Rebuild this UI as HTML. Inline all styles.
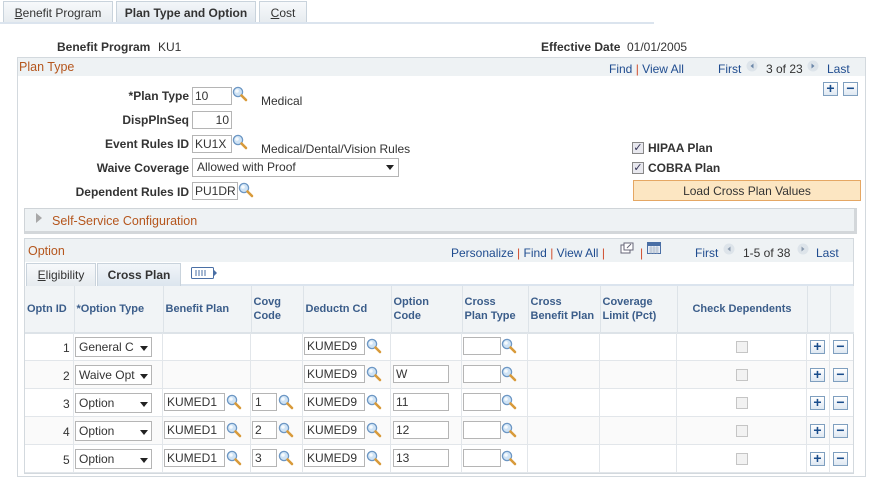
<!DOCTYPE html>
<html><head><meta charset="utf-8"><style>
*{box-sizing:border-box;margin:0;padding:0}
body{width:869px;height:482px;background:#fff;font-family:"Liberation Sans",Arial,sans-serif;font-size:12px;color:#333;position:relative;overflow:hidden}
.a{position:absolute;white-space:nowrap}
.tab{position:absolute;top:1px;height:22px;border:1px solid #c9d3dc;border-bottom:none;background:linear-gradient(#f7f9fb,#e6ebef);color:#333;font-size:12px;padding-top:4px;text-align:center}
.lbl{position:absolute;font-weight:bold;color:#333;text-align:right;white-space:nowrap}
.inp{position:absolute;height:18px;border:1px solid #b5b5b5;background:#fff;font-size:12px;padding:1px 2px;color:#333;white-space:nowrap;overflow:hidden}
.lnk{color:#1f4c8f}
.sep{color:#d04c2c}
.pm{position:absolute;width:15px;height:14px;border:1px solid #7f9fbf;background:linear-gradient(#fff,#dfe8f2);color:#1a4d8c;font-weight:bold;font-size:14px;line-height:11px;text-align:center}
.mag{position:absolute;width:16px;height:16px}
table{position:absolute;left:25px;top:286px;border-collapse:collapse;table-layout:fixed}
th{background:#f1f4f6;color:#3b5d8a;font-size:11px;font-weight:bold;text-align:left;vertical-align:middle;padding:0 2px;height:47px;border-left:1px solid #dde3e8;border-bottom:2px solid #dde3e8;line-height:14px}
.r{position:absolute;left:25px;width:828px;height:28px;border-bottom:1px solid #e2e6ea}
.vl{position:absolute;top:333px;width:1px;height:140px;background:#e2e6ea}
.sel{position:absolute;height:20px;width:77px;border:1px solid #b5b5b5;background:#fff;padding:2px 3px;font-size:12px;overflow:hidden;white-space:nowrap}
.cb{position:absolute;width:12px;height:12px;border:1px solid #c5c5c5;background:#f2f2f2}
</style></head><body>
<svg width="0" height="0" style="position:absolute"><defs><symbol id="m" viewBox="0 0 16 16"><circle cx="6" cy="6" r="4.6" fill="#cfe3f5" stroke="#6d97c4" stroke-width="1.3"/><circle cx="5" cy="5" r="1.8" fill="#fff" opacity=".8"/><path d="M9.5 9.5 L14 14" stroke="#d89a3a" stroke-width="2.6" stroke-linecap="round"/></symbol></defs></svg>

<div class="tab" style="left:3px;width:110px"><u>B</u>enefit Program</div>
<div class="tab" style="left:116px;width:140px;background:linear-gradient(#f3f6f9,#dfe6ed);font-weight:bold">Plan Type and Option</div>
<div class="tab" style="left:259px;width:48px"><u>C</u>ost</div>
<div class="a" style="left:0;top:22px;width:654px;height:2px;background:#dbe4ee"></div>

<div class="lbl" style="left:57px;top:40px">Benefit Program</div><div class="a" style="left:158px;top:40px">KU1</div>
<div class="lbl" style="left:541px;top:40px">Effective Date</div><div class="a" style="left:627px;top:40px">01/01/2005</div>

<div class="a" style="left:17px;top:57px;width:849px;height:420px;border:1px solid #d3d9de"></div>
<div class="a" style="left:18px;top:58px;width:847px;height:18px;background:#eef2f4"></div>
<div class="a" style="left:19px;top:60px;color:#b5561d;font-size:12.5px">Plan Type</div>
<div class="a" style="left:609px;top:62px"><span class="lnk">Find</span> <span class="sep">|</span> <span class="lnk">View All</span></div>
<div class="a lnk" style="left:718px;top:62px">First</div>
<svg class="a" style="left:746px;top:60px" width="12" height="12"><circle cx="6" cy="6" r="5.5" fill="#dde4ea"/><path d="M7.5 3.5 L4.5 6 L7.5 8.5Z" fill="#6a86a8"/></svg>
<div class="a" style="left:766px;top:62px">3 of 23</div>
<svg class="a" style="left:807px;top:60px" width="12" height="12"><circle cx="6" cy="6" r="5.5" fill="#dde4ea"/><path d="M4.5 3.5 L7.5 6 L4.5 8.5Z" fill="#6a86a8"/></svg>
<div class="a lnk" style="left:827px;top:62px">Last</div>
<div class="pm" style="left:823px;top:82px">+</div><div class="pm" style="left:843px;top:82px">−</div>

<div class="lbl" style="right:680px;top:89px">*Plan Type</div>
<div class="inp" style="left:192px;top:87px;width:40px">10</div><svg class="mag" style="left:232px;top:86px"><use href="#m"/></svg>
<div class="a" style="left:261px;top:94px">Medical</div>
<div class="lbl" style="right:680px;top:113px">DispPlnSeq</div>
<div class="inp" style="left:192px;top:111px;width:40px;text-align:right">10</div>
<div class="lbl" style="right:680px;top:137px">Event Rules ID</div>
<div class="inp" style="left:192px;top:135px;width:40px">KU1X</div><svg class="mag" style="left:232px;top:134px"><use href="#m"/></svg>
<div class="a" style="left:261px;top:142px">Medical/Dental/Vision Rules</div>
<div class="lbl" style="right:680px;top:161px">Waive Coverage</div>
<div class="inp" style="left:192px;top:158px;width:207px;height:19px;padding-left:4px">Allowed with Proof</div>
<svg class="a" style="left:386px;top:165px" width="8" height="5"><path d="M0 0H8L4 5Z" fill="#222"/></svg>
<div class="lbl" style="right:680px;top:185px">Dependent Rules ID</div>
<div class="inp" style="left:192px;top:182px;width:46px">PU1DR</div><svg class="mag" style="left:238px;top:182px"><use href="#m"/></svg>

<div class="a" style="left:632px;top:142px;width:12px;height:12px;border:1px solid #888;background:#e8e8ee;color:#335;font-size:11px;line-height:10px;text-align:center">✓</div>
<div class="lbl" style="left:648px;top:141px">HIPAA Plan</div>
<div class="a" style="left:632px;top:162px;width:12px;height:12px;border:1px solid #888;background:#e8e8ee;color:#335;font-size:11px;line-height:10px;text-align:center">✓</div>
<div class="lbl" style="left:648px;top:161px">COBRA Plan</div>
<div class="a" style="left:633px;top:180px;width:228px;height:21px;background:#fce6c2;border:1px solid #e5a763;text-align:center;padding-top:3px;font-size:12px">Load Cross Plan Values</div>

<div class="a" style="left:24px;top:208px;width:833px;height:26px;border:1px solid #cfd4d8;border-right:3px solid #d3d7da;border-bottom:3px solid #d3d7da;background:#eef2f4"></div>
<svg class="a" style="left:36px;top:213px" width="6" height="10"><path d="M0 0L6 5L0 10Z" fill="#a8a8a8"/></svg>
<div class="a" style="left:52px;top:214px;color:#b5561d;font-size:12.5px">Self-Service Configuration</div>

<div class="a" style="left:24px;top:238px;width:830px;height:236px;border:1px solid #d3d9de"></div>
<div class="a" style="left:25px;top:239px;width:828px;height:23px;background:#eef2f4"></div>
<div class="a" style="left:28px;top:244px;color:#b5561d;font-size:12.5px">Option</div>
<div class="a" style="left:451px;top:246px"><span class="lnk">Personalize</span> <span class="sep">|</span> <span class="lnk">Find</span> <span class="sep">|</span> <span class="lnk">View All</span> <span class="sep">|</span></div>
<svg class="a" style="left:620px;top:242px" width="14" height="12"><rect x="1" y="3" width="9" height="8" fill="#fff" stroke="#667"/><rect x="4" y="1" width="9" height="7" fill="#fff" stroke="#667"/><path d="M7 6L11 2" stroke="#667"/></svg>
<div class="a sep" style="left:640px;top:246px">|</div>
<svg class="a" style="left:647px;top:242px" width="14" height="12"><rect x=".5" y=".5" width="13" height="11" fill="#e9eef6" stroke="#4a6fa5"/><rect x="1" y="1" width="12" height="3" fill="#4a6fa5"/><path d="M2 6h10M2 8h10M2 10h10M4 4v8M7 4v8M10 4v8" stroke="#9ab" stroke-width=".6"/></svg>
<div class="a lnk" style="left:695px;top:246px">First</div>
<svg class="a" style="left:723px;top:243px" width="12" height="12"><circle cx="6" cy="6" r="5.5" fill="#dde4ea"/><path d="M7.5 3.5 L4.5 6 L7.5 8.5Z" fill="#8a9aae"/></svg>
<div class="a" style="left:743px;top:246px">1-5 of 38</div>
<svg class="a" style="left:797px;top:243px" width="12" height="12"><circle cx="6" cy="6" r="5.5" fill="#dde4ea"/><path d="M4.5 3.5 L7.5 6 L4.5 8.5Z" fill="#8a9aae"/></svg>
<div class="a lnk" style="left:816px;top:246px">Last</div>

<div class="tab" style="left:26px;top:263px;width:70px;height:23px"><u>E</u>ligibility</div>
<div class="tab" style="left:97px;top:263px;width:84px;height:23px;font-weight:bold;background:linear-gradient(#f1f5f9,#dce5ee)">Cross Plan</div>
<svg class="a" style="left:191px;top:267px" width="27" height="12"><rect x=".5" y=".5" width="22" height="11" rx="1" fill="#fff" stroke="#4a6fa5"/><path d="M4 4h12M4 6h12M4 8h12" stroke="#4a6fa5" stroke-dasharray="2 1"/><path d="M22 2L26 6L22 10Z" fill="#4a6fa5"/></svg>
<div class="a" style="left:181px;top:284px;width:672px;height:2px;background:#dbe4ee"></div>

<table>
<colgroup><col style="width:49px"><col style="width:89px"><col style="width:88px"><col style="width:52px"><col style="width:88px"><col style="width:71px"><col style="width:66px"><col style="width:72px"><col style="width:77px"><col style="width:130px"><col style="width:23px"><col style="width:24px"></colgroup>
<tr><th style="border-left:none">Optn ID</th><th>*Option Type</th><th>Benefit Plan</th><th>Covg<br>Code</th><th>Deductn Cd</th><th>Option<br>Code</th><th>Cross<br>Plan Type</th><th style="white-space:nowrap">Cross<br>Benefit Plan</th><th>Coverage<br>Limit (Pct)</th><th style="text-align:center">Check Dependents</th><th></th><th></th></tr>
</table>

<div class="r" style="top:333px"></div>
<div class="r" style="top:361px;background:#fafafa"></div>
<div class="r" style="top:389px"></div>
<div class="r" style="top:417px;background:#fafafa"></div>
<div class="r" style="top:445px"></div>
<div class="vl" style="left:73px"></div><div class="vl" style="left:162px"></div><div class="vl" style="left:250px"></div><div class="vl" style="left:302px"></div><div class="vl" style="left:390px"></div><div class="vl" style="left:461px"></div><div class="vl" style="left:527px"></div><div class="vl" style="left:599px"></div><div class="vl" style="left:676px"></div><div class="vl" style="left:806px"></div><div class="vl" style="left:829px"></div>

<div class="a" style="left:63px;top:341px">1</div><div class="sel" style="left:75px;top:337px">General C</div>
<div class="a" style="left:63px;top:369px">2</div><div class="sel" style="left:75px;top:365px">Waive Opt</div>
<div class="a" style="left:63px;top:397px">3</div><div class="sel" style="left:75px;top:393px">Option</div>
<div class="a" style="left:63px;top:425px">4</div><div class="sel" style="left:75px;top:421px">Option</div>
<div class="a" style="left:63px;top:453px">5</div><div class="sel" style="left:75px;top:449px">Option</div>
<svg class="a" style="left:140px;top:346px" width="8" height="5"><path d="M0 0H8L4 5Z" fill="#222"/></svg>
<svg class="a" style="left:140px;top:374px" width="8" height="5"><path d="M0 0H8L4 5Z" fill="#222"/></svg>
<svg class="a" style="left:140px;top:402px" width="8" height="5"><path d="M0 0H8L4 5Z" fill="#222"/></svg>
<svg class="a" style="left:140px;top:430px" width="8" height="5"><path d="M0 0H8L4 5Z" fill="#222"/></svg>
<svg class="a" style="left:140px;top:458px" width="8" height="5"><path d="M0 0H8L4 5Z" fill="#222"/></svg>

<div class="inp" style="left:164px;top:393px;width:61px">KUMED1</div><svg class="mag" style="left:226px;top:394px"><use href="#m"/></svg>
<div class="inp" style="left:164px;top:421px;width:61px">KUMED1</div><svg class="mag" style="left:226px;top:422px"><use href="#m"/></svg>
<div class="inp" style="left:164px;top:449px;width:61px">KUMED1</div><svg class="mag" style="left:226px;top:450px"><use href="#m"/></svg>
<div class="inp" style="left:252px;top:393px;width:25px">1</div><svg class="mag" style="left:278px;top:394px"><use href="#m"/></svg>
<div class="inp" style="left:252px;top:421px;width:25px">2</div><svg class="mag" style="left:278px;top:422px"><use href="#m"/></svg>
<div class="inp" style="left:252px;top:449px;width:25px">3</div><svg class="mag" style="left:278px;top:450px"><use href="#m"/></svg>

<div class="inp" style="left:304px;top:337px;width:61px">KUMED9</div><svg class="mag" style="left:366px;top:338px"><use href="#m"/></svg>
<div class="inp" style="left:304px;top:365px;width:61px">KUMED9</div><svg class="mag" style="left:366px;top:366px"><use href="#m"/></svg>
<div class="inp" style="left:304px;top:393px;width:61px">KUMED9</div><svg class="mag" style="left:366px;top:394px"><use href="#m"/></svg>
<div class="inp" style="left:304px;top:421px;width:61px">KUMED9</div><svg class="mag" style="left:366px;top:422px"><use href="#m"/></svg>
<div class="inp" style="left:304px;top:449px;width:61px">KUMED9</div><svg class="mag" style="left:366px;top:450px"><use href="#m"/></svg>

<div class="inp" style="left:393px;top:365px;width:56px">W</div>
<div class="inp" style="left:393px;top:393px;width:56px">11</div>
<div class="inp" style="left:393px;top:421px;width:56px">12</div>
<div class="inp" style="left:393px;top:449px;width:56px">13</div>

<div class="inp" style="left:463px;top:337px;width:38px"></div><svg class="mag" style="left:501px;top:338px"><use href="#m"/></svg>
<div class="inp" style="left:463px;top:365px;width:38px"></div><svg class="mag" style="left:501px;top:366px"><use href="#m"/></svg>
<div class="inp" style="left:463px;top:393px;width:38px"></div><svg class="mag" style="left:501px;top:394px"><use href="#m"/></svg>
<div class="inp" style="left:463px;top:421px;width:38px"></div><svg class="mag" style="left:501px;top:422px"><use href="#m"/></svg>
<div class="inp" style="left:463px;top:449px;width:38px"></div><svg class="mag" style="left:501px;top:450px"><use href="#m"/></svg>

<div class="cb" style="left:736px;top:341px"></div>
<div class="cb" style="left:736px;top:369px"></div>
<div class="cb" style="left:736px;top:397px"></div>
<div class="cb" style="left:736px;top:425px"></div>
<div class="cb" style="left:736px;top:453px"></div>

<div class="pm" style="left:810px;top:340px">+</div><div class="pm" style="left:833px;top:340px">−</div>
<div class="pm" style="left:810px;top:368px">+</div><div class="pm" style="left:833px;top:368px">−</div>
<div class="pm" style="left:810px;top:396px">+</div><div class="pm" style="left:833px;top:396px">−</div>
<div class="pm" style="left:810px;top:424px">+</div><div class="pm" style="left:833px;top:424px">−</div>
<div class="pm" style="left:810px;top:452px">+</div><div class="pm" style="left:833px;top:452px">−</div>
</body></html>
